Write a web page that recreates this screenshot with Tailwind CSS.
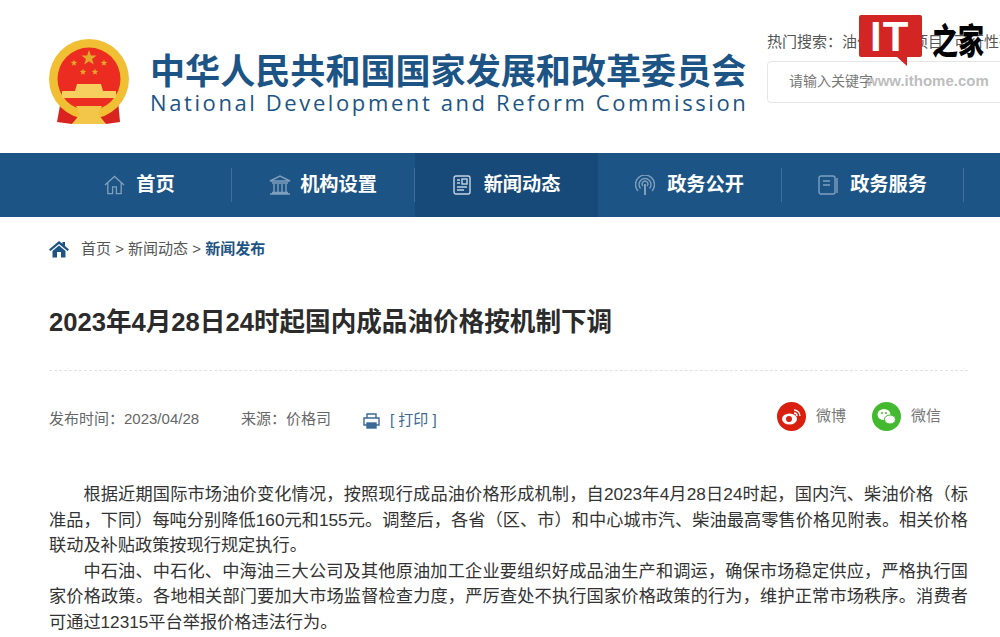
<!DOCTYPE html>
<html lang="zh-CN">
<head>
    <meta charset="UTF-8">
    <script src="https://cdn.jsdelivr.net/npm/@tailwindcss/browser@4"></script>
    <title>2023年4月28日24时起国内成品油价格按机制下调</title>
</head>
<body class="relative h-[637px] w-[1000px] overflow-hidden bg-white font-['Liberation_Sans','Noto_Sans_CJK_SC',sans-serif] text-[#333]">
    <!-- Header -->
    <header class="flex h-[153px] w-[1000px] overflow-hidden pl-[48px]">
        <svg class="mt-[38px] h-[87px] w-[82px] shrink-0" viewBox="0 0 82 87">
            <defs><path id="star" d="M0 -1 L.235 -.324 L.951 -.309 L.38 .124 L.588 .809 L0 .4 L-.588 .809 L-.38 .124 L-.951 -.309 L-.235 -.324 Z" fill="#e3a92b"/></defs>
            <path d="M13 62 L9 84 L24 86 L34 78 L48 78 L58 86 L72 84 L70 62 Z" fill="#d9231f"/>
            <circle cx="41" cy="41" r="40" fill="#f1bf33"/>
            <circle cx="41" cy="41" r="31.500" fill="#ec2c20"/>
            <use href="#star" transform="translate(41 20) scale(8)"/>
            <use href="#star" transform="translate(26 25) scale(3.500)"/>
            <use href="#star" transform="translate(56 25) scale(3.500)"/>
            <use href="#star" transform="translate(35 34) scale(3.500)"/>
            <use href="#star" transform="translate(47 34) scale(3.500)"/>
            <path d="M29 46 L53 46 L55 53 L68 53 L68 60 L14 60 L14 53 L27 53 Z" fill="#f6cf5e"/>
            <path d="M13 62 Q27 76 41 68 Q55 76 69 62 L70 66 Q56 82 41 74 Q26 82 12 66 Z" fill="#f1bf33"/>
            <path d="M28 68 L54 68 L50 76 L58 86 L24 86 L32 76 Z" fill="#f3c549"/>
        </svg>
        <div class="ml-[20px] mt-[53px] w-[600px] shrink-0 text-[#1c5485]">
            <div class="whitespace-nowrap text-[35.100px] leading-[38px] font-bold">中华人民共和国国家发展和改革委员会</div>
            <div class="whitespace-nowrap font-['Open_Sans'] text-[22px] leading-[22px] tracking-[2.600px]">National Development and Reform Commission</div>
        </div>
        <div class="ml-[17px] mt-[30px] w-[280px] shrink-0">
            <div class="flex gap-[11px] whitespace-nowrap text-[15px] leading-[24px] text-[#555]">
                <span>热门搜索：油价</span><span>投资项目</span><span>可行性研究</span>
            </div>
            <div class="mt-[7px] h-[42px] rounded border border-[#e6e6e6] pl-[21px] text-[14px] leading-[38px] text-[#777]">请输入关键字</div>
        </div>
    </header>

    <!-- Navigation Bar -->
    <nav class="flex h-[64px] bg-[#1c5485] pl-[48px] text-white">
        <a href="#" class="flex w-[183px] items-center justify-center gap-[11px]">
            <svg class="h-[20px] w-[21px]" viewBox="0 0 22 20" fill="none" stroke="#7f9fbd" stroke-width="1.400"><path d="M1 10 L11 1 L21 10 M4 8 V19 H9 V12 H13 V19 H18 V8"/></svg>
            <span class="text-[19.200px] font-bold">首页</span>
        </a>
        <div class="my-[15px] w-px bg-[#41709b]"></div>
        <a href="#" class="flex w-[182px] items-center justify-center gap-[9px]">
            <svg class="h-[20px] w-[22px]" viewBox="0 0 22 20" fill="none" stroke="#7f9fbd" stroke-width="1.400"><path d="M1 6 L11 1 L21 6 Z M3 8 H19 M5 9 V17 M9 9 V17 M13 9 V17 M17 9 V17 M1 19 H21 M3 17.500 H19"/></svg>
            <span class="text-[19.200px] font-bold">机构设置</span>
        </a>
        <div class="my-[15px] w-px bg-[#41709b]"></div>
        <a href="#" class="flex w-[183px] items-center justify-center gap-[13px] bg-[#174a78]">
            <svg class="h-[20px] w-[18px]" viewBox="0 0 18 20" fill="none" stroke="#c5d4e2" stroke-width="1.400"><rect x="1" y="1" width="16" height="18" rx="2"/><rect x="9" y="4" width="5" height="5"/><path d="M4 5 H7 M4 8 H7 M4 12 H14 M4 15 H11"/></svg>
            <span class="text-[19.200px] font-bold">新闻动态</span>
        </a>
        <a href="#" class="flex w-[183px] items-center justify-center gap-[12px]">
            <svg class="h-[20px] w-[20px]" viewBox="0 0 20 20" fill="none" stroke="#7f9fbd" stroke-width="1.400"><path d="M3 16 A9.500 9.500 0 1 1 17 16 M5.500 13.500 A6 6 0 1 1 14.500 13.500 M8 11 A2.800 2.800 0 1 1 12 11"/><path d="M10 9 V20" stroke-width="2"/></svg>
            <span class="text-[19.200px] font-bold">政务公开</span>
        </a>
        <div class="my-[15px] w-px bg-[#41709b]"></div>
        <a href="#" class="flex w-[181px] items-center justify-center gap-[12px]">
            <svg class="h-[20px] w-[20px]" viewBox="0 0 20 20" fill="none" stroke="#7f9fbd" stroke-width="1.400"><rect x="1" y="1" width="16" height="18" rx="2"/><path d="M5 6 H12 M5 10 H12 M19 3 V18"/></svg>
            <span class="text-[19.200px] font-bold">政务服务</span>
        </a>
        <div class="my-[15px] w-px bg-[#41709b]"></div>
    </nav>

    <!-- Content Section -->
    <main class="w-[968px] pl-[49px]">
        <div class="flex h-[64px] items-center text-[15px]">
            <svg class="mr-[12px] h-[18px] w-[20px]" viewBox="0 0 20 18" fill="#1c5485"><path d="M10 1 L0 9.500 L1.500 11 L10 4 L18.500 11 L20 9.500 L16 6 V2 H13.500 V3.800 Z"/><path d="M3.500 11 L10 5.500 L16.500 11 V17.500 H12 V12 H8 V17.500 H3.500 Z"/></svg>
            <span class="text-[#555]">首页 &gt; 新闻动态 &gt; <span class="font-bold text-[#1c5485]">新闻发布</span></span>
        </div>
        <h1 class="mt-[25px] h-[65px] border-b border-dashed border-[#e2e2e2] text-[25.600px] leading-[32px] font-bold text-[#2b2b2b]">2023年4月28日24时起国内成品油价格按机制下调</h1>
        <div class="mt-[33px] flex h-[30px] items-center text-[15px] text-[#666]">
            <span class="w-[192px]">发布时间：2023/04/28</span>
            <span class="w-[122px]">来源：价格司</span>
            <svg class="mr-[10px] mt-[4px] h-[16px] w-[17px]" viewBox="0 0 17 16" fill="none" stroke="#3b6a94" stroke-width="1.400"><path d="M4 5 V1 H13 V5"/><path d="M4 12 H1 V5 H16 V12 H13"/><rect x="4" y="10" width="9" height="5" fill="#3b6a94"/></svg>
            <span class="mt-[3px] text-[#3b6a94]">[ 打印 ]</span>
            <div class="ml-auto mb-[6px] flex items-center pr-[27px] text-[#777]">
                <svg class="mr-[10px] h-[29px] w-[29px]" viewBox="0 0 29 29"><circle cx="14.500" cy="14.500" r="14.500" fill="#d9200f"/><ellipse cx="12.500" cy="17" rx="7.500" ry="5.500" fill="#fff"/><circle cx="12" cy="17" r="3" fill="#d9200f"/><path d="M17 8 A6 6 0 0 1 23 14 M17 11 A3 3 0 0 1 20 14" fill="none" stroke="#fff" stroke-width="1.300"/></svg>
                <span class="w-[56px]">微博</span>
                <svg class="mr-[10px] h-[29px] w-[29px]" viewBox="0 0 29 29"><circle cx="14.500" cy="14.500" r="14.500" fill="#43b92f"/><ellipse cx="12" cy="12.500" rx="6.500" ry="5.500" fill="#fff"/><ellipse cx="18" cy="17.500" rx="5.500" ry="4.500" fill="#fff" stroke="#43b92f"/><circle cx="10" cy="11" r="1" fill="#43b92f"/><circle cx="14" cy="11" r="1" fill="#43b92f"/></svg>
                <span>微信</span>
            </div>
        </div>
        <div class="mt-[48px] text-justify text-[17.200px] leading-[25.600px] text-[#333]">
            <p class="indent-[34.400px]">根据近期国际市场油价变化情况，按照现行成品油价格形成机制，自2023年4月28日24时起，国内汽、柴油价格（标准品，下同）每吨分别降低160元和155元。调整后，各省（区、市）和中心城市汽、柴油最高零售价格见附表。相关价格联动及补贴政策按现行规定执行。</p>
            <p class="indent-[34.400px]">中石油、中石化、中海油三大公司及其他原油加工企业要组织好成品油生产和调运，确保市场稳定供应，严格执行国家价格政策。各地相关部门要加大市场监督检查力度，严厉查处不执行国家价格政策的行为，维护正常市场秩序。消费者可通过12315平台举报价格违法行为。</p>
        </div>
    </main>

    <!-- Watermark -->
    <div class="absolute top-[15px] left-[859px] h-[42px] w-[63px] rounded-[2px] bg-[#d42525] pl-[11px] text-[42px] leading-[44px] font-bold tracking-[1px] text-white">IT
        <div class="absolute -bottom-[9px] left-[38px] h-0 w-0 border-t-[9px] border-l-[10px] border-t-[#d42525] border-l-transparent"></div>
    </div>
    <div class="absolute top-[22px] left-[932px] origin-top scale-y-[1.350] whitespace-nowrap text-[26px] leading-[30px] font-black text-black">之家</div>
    <div class="absolute top-[71px] left-[866px] font-['Liberation_Sans'] text-[15px] leading-[20px] font-bold text-[#b5b5b5]/90">www.ithome.com</div>
</body>
</html>
